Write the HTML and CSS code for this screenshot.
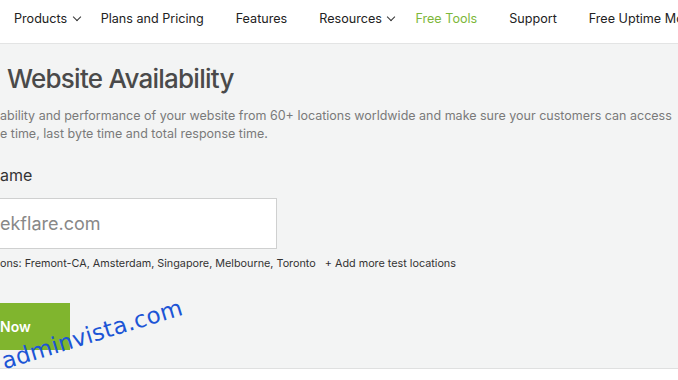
FILE: index.html
```html
<!DOCTYPE html>
<html lang="en">
<head>
    <meta charset="UTF-8">
    <meta name="viewport" content="width=device-width, initial-scale=1.0">
    <title>Check Website Availability</title>
    <link rel="stylesheet" href="styles.css">
</head>
<body>
    <header class="topbar">
        <nav>
            <ul class="menu">
                <li class="drop">Products <span class="chev"></span></li>
                <li>Plans and Pricing</li>
                <li>Features</li>
                <li class="drop">Resources <span class="chev"></span></li>
                <li class="active">Free Tools</li>
                <li>Support</li>
                <li>Free Uptime Mo</li>
            </ul>
        </nav>
    </header>
    <main class="tool">
        <h1>Website Availability</h1>
        <p class="lead">ability and performance of your website from 60+ locations worldwide and make sure your customers can access<br>e time, last byte time and total response time.</p>
        <label class="field-label">ame</label>
        <div class="input">ekflare.com</div>
        <div class="locations">
            <span>ons: Fremont-CA, Amsterdam, Singapore, Melbourne, Toronto</span>
            <span class="add">+ Add more test locations</span>
        </div>
        <div class="btn">Now</div>
    </main>
    <div class="below"></div>
    <div class="watermark">adminvista.com</div>
</body>
</html>
```

FILE: styles.css
```css
html, body {
    margin: 0;
    padding: 0;
    height: 100%;
    overflow: hidden;
}
body {
    font-family: Inter, "Noto Sans", sans-serif;
    background-color: #fff;
    color: #333;
    position: relative;
}
.topbar {
    background-color: #fff;
    height: 43px;
    border-bottom: 1px solid #e3e4e4;
}
.menu {
    list-style: none;
    margin: 0;
    padding: 0 0 0 14px;
    display: flex;
    align-items: center;
    height: 36px;
    white-space: nowrap;
    font-size: 12.6px;
    color: #222;
    overflow: hidden;
}
.menu li {
    margin-right: 32px;
}
.menu li.drop {
    margin-right: 19px;
}
.menu li.active {
    color: #7db73a;
}
.chev {
    display: inline-block;
    width: 5px;
    height: 5px;
    border-right: 1px solid #333;
    border-bottom: 1px solid #333;
    transform: rotate(45deg);
    margin: 0 2px 3px 3px;
}
.tool {
    background-color: #f3f4f4;
    height: 324px;
    border-bottom: 1px solid #dfe0e0;
    overflow: hidden;
}
h1 {
    margin: 0;
    padding: 18px 0 0 7px;
    font-size: 26px;
    font-weight: 500;
    letter-spacing: -0.75px;
    color: #4a4a4a;
    line-height: 34px;
}
.lead {
    margin: 11px 0 0;
    font-size: 12.5px;
    line-height: 18px;
    color: #7a7a7a;
    white-space: nowrap;
}
.field-label {
    display: block;
    margin-top: 22px;
    font-size: 16px;
    line-height: 20px;
    color: #333;
}
.input {
    margin-top: 13px;
    width: 277px;
    height: 51px;
    box-sizing: border-box;
    background-color: #fff;
    border: 1px solid #cfd0d0;
    border-left: none;
    font-size: 18px;
    line-height: 49px;
    color: #888;
}
.locations {
    margin-top: 8px;
    font-size: 10.8px;
    line-height: 14px;
    color: #333;
    white-space: nowrap;
}
.locations .add {
    margin-left: 6px;
}
.btn {
    margin-top: 32px;
    width: 70px;
    height: 47px;
    background-color: #80b52e;
    color: #fff;
    font-size: 14px;
    font-weight: 600;
    line-height: 47px;
}
.below {
    background-color: #fff;
    height: 20px;
}
.watermark {
    position: absolute;
    left: 6px;
    top: 348px;
    font-family: "DejaVu Sans", Verdana, sans-serif;
    font-size: 23px;
    color: #1c55d6;
    transform: rotate(-17deg);
    transform-origin: left bottom;
    white-space: nowrap;
    letter-spacing: 0.3px;
}
```
